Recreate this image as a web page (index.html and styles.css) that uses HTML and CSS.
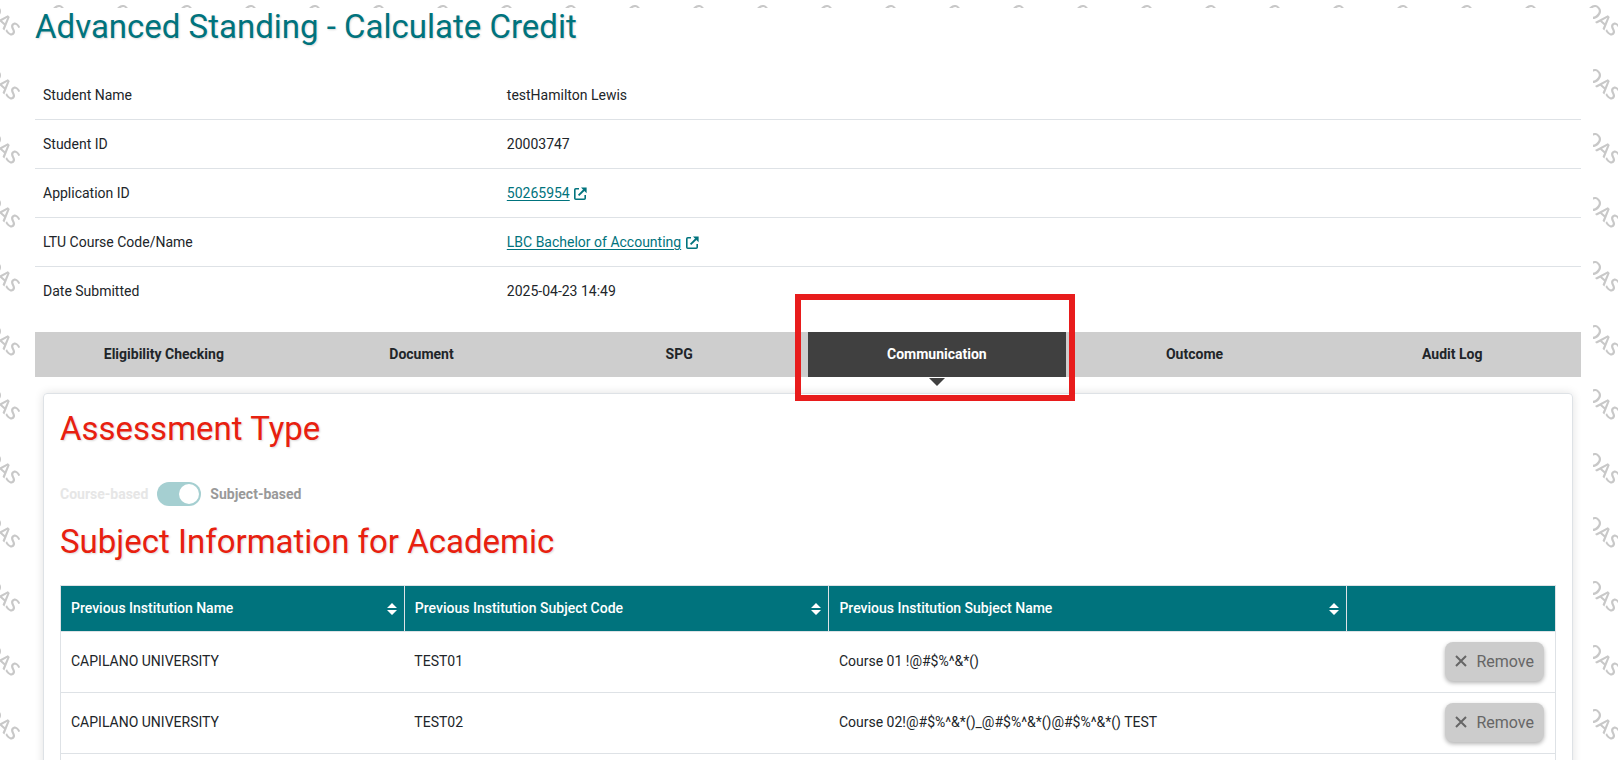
FILE: index.html
```html
<!DOCTYPE html>
<html lang="en">

<head>
    <meta charset="UTF-8">
    <meta name="viewport" content="width=device-width, initial-scale=1.0">
    <title>Advanced Standing - Calculate Credit</title>
    <link rel="stylesheet" href="styles.css">
</head>

<body>
    <!-- Shared icons -->
    <svg class="icon-defs" aria-hidden="true">
        <symbol id="icon-external" viewBox="0 0 13 13">
            <path d="M5 1.8H1.8Q.8 1.8 .8 2.8V11.2Q.8 12.2 1.8 12.2H10.2Q11.2 12.2 11.2 11.2V8" fill="none" stroke="currentColor" stroke-width="1.6" />
            <path d="M4.6 8.4L10 3" fill="none" stroke="currentColor" stroke-width="1.8" />
            <path d="M7 .6H12.6V6.2Z" fill="currentColor" />
        </symbol>
        <symbol id="icon-sort" viewBox="0 0 10 12">
            <path d="M5 0L10 5H0ZM0 7H10L5 12Z" fill="currentColor" />
        </symbol>
        <symbol id="icon-close" viewBox="0 0 12 12">
            <path d="M1 1L11 11M11 1L1 11" fill="none" stroke="currentColor" stroke-width="2" />
        </symbol>
    </svg>

    <svg class="watermark" aria-hidden="true">
        <pattern id="oas" width="64" height="64" patternUnits="userSpaceOnUse">
            <text class="watermark-text" transform="translate(-16 12) rotate(42)">OAS</text>
            <text class="watermark-text" transform="translate(48 12) rotate(42)">OAS</text>
        </pattern>
        <rect width="100%" height="100%" fill="url(#oas)" />
    </svg>

    <main class="page">
        <h1 class="page-title">Advanced Standing - Calculate Credit</h1>

        <table class="details">
            <tr>
                <th scope="row">Student Name</th>
                <td>testHamilton Lewis</td>
            </tr>
            <tr>
                <th scope="row">Student ID</th>
                <td>20003747</td>
            </tr>
            <tr>
                <th scope="row">Application ID</th>
                <td><a href="#application">50265954</a> <svg class="icon-external"><use href="#icon-external" /></svg></td>
            </tr>
            <tr>
                <th scope="row">LTU Course Code/Name</th>
                <td><a href="#course">LBC Bachelor of Accounting</a> <svg class="icon-external"><use href="#icon-external" /></svg></td>
            </tr>
            <tr>
                <th scope="row">Date Submitted</th>
                <td>2025-04-23 14:49</td>
            </tr>
        </table>

        <nav class="tabs">
            <button class="tab" type="button">Eligibility Checking</button>
            <button class="tab" type="button">Document</button>
            <button class="tab" type="button">SPG</button>
            <button class="tab active" type="button">Communication</button>
            <button class="tab" type="button">Outcome</button>
            <button class="tab" type="button">Audit Log</button>
        </nav>

        <section class="card">
            <h2 class="section-title">Assessment Type</h2>

            <div class="switch-row">
                <span class="switch-off">Course-based</span>
                <input class="switch" type="checkbox" id="assessmentType" checked disabled>
                <label class="switch-on" for="assessmentType">Subject-based</label>
            </div>

            <h2 class="section-title">Subject Information for Academic</h2>

            <table class="subjects">
                <colgroup>
                    <col class="col-institution">
                    <col class="col-code">
                    <col class="col-name">
                    <col class="col-action">
                </colgroup>
                <thead>
                    <tr>
                        <th><div class="sortable">Previous Institution Name <svg class="icon-sort"><use href="#icon-sort" /></svg></div></th>
                        <th><div class="sortable">Previous Institution Subject Code <svg class="icon-sort"><use href="#icon-sort" /></svg></div></th>
                        <th><div class="sortable">Previous Institution Subject Name <svg class="icon-sort"><use href="#icon-sort" /></svg></div></th>
                        <th></th>
                    </tr>
                </thead>
                <tbody>
                    <tr>
                        <td>CAPILANO UNIVERSITY</td>
                        <td>TEST01</td>
                        <td>Course 01 !@#$%^&amp;*()</td>
                        <td class="action"><button class="remove" type="button" disabled><svg class="icon-close"><use href="#icon-close" /></svg>Remove</button></td>
                    </tr>
                    <tr>
                        <td>CAPILANO UNIVERSITY</td>
                        <td>TEST02</td>
                        <td>Course 02!@#$%^&amp;*()_@#$%^&amp;*()@#$%^&amp;*() TEST</td>
                        <td class="action"><button class="remove" type="button" disabled><svg class="icon-close"><use href="#icon-close" /></svg>Remove</button></td>
                    </tr>
                    <tr>
                        <td></td>
                        <td></td>
                        <td></td>
                        <td></td>
                    </tr>
                </tbody>
            </table>
        </section>
    </main>
</body>

</html>
```
FILE: styles.css
```css
* {
    box-sizing: border-box;
}

body {
    margin: 0;
    padding: 8px 25px 0;
    background: #fff;
    color: #212529;
    font-family: Roboto, sans-serif;
    font-size: 14px;
    line-height: 21px;
    height: 100vh;
    overflow: hidden;
}

.icon-defs {
    position: absolute;
    width: 0;
    height: 0;
}

.watermark {
    position: absolute;
    top: 0;
    left: 0;
    width: 100%;
    height: 100%;
    z-index: -1;
}

.watermark-text {
    font-family: "Open Sans", sans-serif;
    font-size: 19px;
    font-weight: 600;
    fill: #c8c8c8;
}

.page {
    padding: 0 12px 0 10px;
    background: #fff;
}

.page-title,
.section-title {
    margin: 0;
    font-size: 33px;
    line-height: 38px;
    font-weight: 400;
    text-shadow: 1px 1px 2px rgba(0, 0, 0, 0.15);
}

.page-title {
    margin-bottom: 25px;
    color: #00737d;
}

.details {
    width: 100%;
    margin-bottom: 16px;
    border-collapse: collapse;
    table-layout: fixed;
    line-height: 20px;
}

.details th,
.details td {
    padding: 14px 8px;
    border-bottom: 1px solid #dee2e6;
    text-align: left;
    font-weight: 400;
}

.details th {
    width: 30%;
}

.details tr:last-child th,
.details tr:last-child td {
    border-bottom-color: transparent;
}

.details a {
    color: #00737d;
    text-underline-offset: 2px;
}

.icon-external {
    width: 13px;
    height: 13px;
    margin-left: 1px;
    color: #00737d;
    vertical-align: -2px;
}

.tabs {
    display: flex;
    margin-bottom: 16px;
    background: #cecece;
}

.tab {
    position: relative;
    flex: 1;
    padding: 12px 0;
    border: 0;
    background: none;
    color: #212529;
    font: inherit;
    font-weight: 700;
}

.tab.active {
    background: #404040;
    color: #fff;
}

/* Highlight frame around the current tab */
.tab.active::before {
    content: "";
    position: absolute;
    top: -38px;
    left: -13px;
    right: -9px;
    bottom: -24px;
    border: 6px solid #e81c1c;
}

.tab.active::after {
    content: "";
    position: absolute;
    top: 46px;
    left: calc(50% - 8px);
    border: 8px solid transparent;
    border-top-color: #404040;
    border-bottom: 0;
}

.card {
    margin: 0 8px;
    padding: 16px;
    border: 1px solid #dee2e6;
    border-radius: 4px;
    box-shadow: 0 0 10px rgba(0, 0, 0, 0.12);
}

.section-title {
    color: #e8200f;
}

.switch-row {
    display: flex;
    align-items: center;
    gap: 9px;
    margin: 34px 0 17px;
    font-weight: 700;
}

.switch-off {
    color: #e6e6e6;
}

.switch-on {
    color: #999;
}

.switch {
    appearance: none;
    width: 44px;
    height: 24px;
    margin: 0;
    padding: 2px;
    border-radius: 12px;
    background: #a5cfd1;
}

.switch::before {
    content: "";
    display: block;
    width: 20px;
    height: 20px;
    margin-left: auto;
    border-radius: 50%;
    background: #fff;
}

.subjects {
    width: 100%;
    margin-top: 24px;
    border: 1px solid #dee2e6;
    border-collapse: collapse;
    table-layout: fixed;
}

.subjects th,
.subjects td {
    padding: 9px 10px 11px;
    border-bottom: 1px solid #dee2e6;
    text-align: left;
}

.subjects th {
    padding: 12px 7px 12px 10px;
    border: 1px solid #dee2e6;
    background: #00737d;
    color: #fff;
    font-weight: 500;
}

.col-institution {
    width: 23%;
}

.col-code {
    width: 28.4%;
}

.col-name {
    width: 34.6%;
}

.sortable {
    display: flex;
    align-items: center;
    justify-content: space-between;
}

.icon-sort {
    width: 10px;
    height: 12px;
}

.subjects .action {
    height: 61px;
    padding-right: 11px;
    text-align: right;
}

.remove {
    display: inline-flex;
    align-items: center;
    gap: 9px;
    height: 39px;
    padding: 0 10px;
    border: 0;
    border-radius: 8px;
    background: #ccc;
    box-shadow: 0 2px 4px rgba(0, 0, 0, 0.3);
    color: #666;
    font: inherit;
    font-size: 16px;
    vertical-align: top;
}

.icon-close {
    width: 12px;
    height: 12px;
}
```
